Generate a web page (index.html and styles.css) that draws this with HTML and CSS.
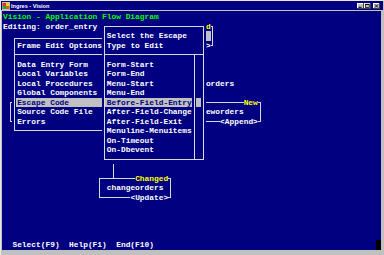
FILE: index.html
```html
<!DOCTYPE html>
<html lang="en">
<head>
    <meta charset="UTF-8">
    <meta name="viewport" content="width=device-width, initial-scale=1.0">
    <title>Ingres - Vision</title>
    <link rel="stylesheet" href="styles.css">
</head>
<body>
    <div class="window">
        <div class="titlebar">
            <svg class="app-icon" viewBox="0 0 8 8">
                <rect x="0" y="0" width="8" height="8" fill="#c0c0c0"/>
                <rect x="0.5" y="1" width="3.5" height="3" fill="#e03020"/>
                <rect x="4" y="1" width="3.5" height="3" fill="#f0d020"/>
                <rect x="0.5" y="4" width="3.5" height="3" fill="#30a040"/>
                <rect x="4" y="4" width="3.5" height="3" fill="#d06010"/>
            </svg>
            <span class="caption">Ingres - Vision</span>
            <div class="controls">
                <span class="ctl"><svg viewBox="0 0 7 6"><rect x="1.5" y="3.8" width="3" height="1" fill="#000"/></svg></span>
                <span class="ctl"><svg viewBox="0 0 7 6"><rect x="1.6" y="1.2" width="3.6" height="3.2" fill="none" stroke="#000" stroke-width="0.7"/><rect x="1.6" y="1" width="3.6" height="0.9" fill="#000"/></svg></span>
                <span class="ctl close"><svg viewBox="0 0 7 6"><path d="M2 1.5 L5 4.5 M5 1.5 L2 4.5" stroke="#000" stroke-width="0.9"/></svg></span>
            </div>
        </div>

        <div class="screen">
            <div class="heading">Vision - Application Flow Diagram</div>
            <div class="editing">Editing: order_entry</div>

            <!-- flow diagram, mostly hidden under the popups -->
            <div class="node node-root">
                <span class="node-tag">Changed</span>
                <span class="node-name"></span>
                <span class="node-act">&lt;Update&gt;</span>
            </div>
            <div class="cursor"></div>
            <div class="node-text">orders</div>
            <div class="node node-left">
                <span class="node-tag"></span>
                <span class="node-name"></span>
                <span class="node-act"></span>
            </div>
            <div class="node node-new">
                <span class="node-tag">New</span>
                <span class="node-name">neworders</span>
                <span class="node-act">&lt;Append&gt;</span>
            </div>
            <div class="link"></div>
            <div class="node node-change">
                <span class="node-tag">Changed</span>
                <span class="node-name">changeorders</span>
                <span class="node-act">&lt;Update&gt;</span>
            </div>

            <div class="popup popup-frame">
                <div class="popup-title">Frame Edit Options</div>
                <div class="rule"></div>
                <ul class="menu">
                    <li>Data Entry Form</li>
                    <li>Local Variables</li>
                    <li>Local Procedures</li>
                    <li>Global Components</li>
                    <li class="on">Escape Code</li>
                    <li>Source Code File</li>
                    <li>Errors</li>
                </ul>
            </div>

            <div class="popup popup-escape">
                <div class="popup-title">Select the Escape</div>
                <div class="popup-title second">Type to Edit</div>
                <div class="rule"></div>
                <ul class="menu">
                    <li>Form-Start</li>
                    <li>Form-End</li>
                    <li>Menu-Start</li>
                    <li>Menu-End</li>
                    <li class="on">Before-Field-Entry</li>
                    <li>After-Field-Change</li>
                    <li>After-Field-Exit</li>
                    <li>Menuline-Menuitems</li>
                    <li>On-Timeout</li>
                    <li>On-Dbevent</li>
                </ul>
                <div class="scroll-track"></div>
                <div class="scroll-thumb"></div>
            </div>

            <div class="keys">Select(F9)  Help(F1)  End(F10)</div>
            <div class="blot"></div>
        </div>
    </div>
</body>
</html>
```

FILE: styles.css
```css
:root {
    --cw: 4.72px;
    --rh: 9.52px;
    --navy: #000080;
    --ink: #ffffff;
    --line: #d8d8e4;
    --hi: #c0c0c0;
}

body {
    margin: 0;
    background: #c0c0c0;
}

.window {
    width: 384px;
    height: 255px;
    box-sizing: border-box;
    padding: 1px 1px 0 1px;
    background: #c0c0c0;
    box-shadow: inset 1px 1px #e8e8e8;
}

.titlebar {
    height: 9px;
    background: var(--navy);
    display: flex;
    align-items: center;
    gap: 1px;
    padding-left: 1px;
    color: #fff;
    font: bold 5.6px "Liberation Sans", Arial, sans-serif;
}
.app-icon {
    width: 8px;
    height: 8px;
}
.controls {
    margin-left: auto;
    margin-right: 3px;
    display: flex;
}
.ctl {
    width: 7px;
    height: 6px;
    background: #c0c0c0;
    box-shadow: inset -1px -1px #404040, inset 1px 1px #fff;
    display: flex;
}
.ctl svg {
    width: 7px;
    height: 6px;
}
.ctl.close {
    margin-left: 2px;
}

/* 80 x 25 character screen */
.screen {
    margin: 1px 2px 5px 1px;
    height: 239px;
    box-sizing: border-box;
    padding: 1px 0 0 1px;
    background: var(--navy);
    display: grid;
    grid-template-columns: repeat(80, var(--cw));
    grid-template-rows: repeat(25, var(--rh));
    font-family: "Liberation Mono", monospace;
    font-size: 7.87px;
    font-weight: bold;
    line-height: var(--rh);
    color: var(--ink);
    white-space: nowrap;
    overflow: hidden;
}

.heading { grid-area: 1 / 1 / 2 / 34; color: #00ff00; }
.editing { grid-area: 2 / 1 / 3 / 21; }
.keys { grid-area: 25 / 3 / 26 / 40; white-space: pre; }
.blot { grid-area: 25 / 80 / 26 / 81; background: #000; }

/* diagram */
.node {
    position: relative;
    display: grid;
    grid-template-rows: repeat(3, var(--rh));
}
.node::before {
    content: "";
    position: absolute;
    inset: calc(var(--rh) / 2 - 0.5px) calc(var(--cw) / 2 - 0.5px);
    border: 1px solid var(--line);
}
.node > span {
    position: relative;
}
.node-tag {
    justify-self: end;
    margin-right: var(--cw);
    background: var(--navy);
    color: #ffff00;
}
.node-name {
    padding-left: calc(var(--cw) * 2);
}
.node-act {
    justify-self: end;
    margin-right: var(--cw);
    background: var(--navy);
}
.node-root { grid-area: 2 / 31 / 5 / 46; }
.node-left { grid-area: 10 / 2 / 13 / 20; }
.node-new { grid-area: 10 / 41 / 13 / 56; }
.node-change { grid-area: 18 / 21 / 21 / 37; }

.cursor { grid-area: 3 / 44 / 4 / 45; background: var(--hi); }
.node-text { grid-area: 8 / 44 / 9 / 50; }

.link {
    grid-area: 16 / 24 / 19 / 25;
    justify-self: center;
    width: 1px;
    margin: calc(var(--rh) / 2) 0;
    background: var(--line);
}

/* popups */
.popup {
    position: relative;
    display: grid;
    background: var(--navy);
}
.popup::before {
    content: "";
    position: absolute;
    inset: calc(var(--rh) / 2 - 0.5px) calc(var(--cw) / 2 - 0.5px);
    border: 1px solid var(--line);
}
.popup > * {
    position: relative;
}
.popup-frame {
    grid-area: 3 / 3 / 14 / 23;
    grid-template-columns: repeat(20, var(--cw));
    grid-template-rows: repeat(11, var(--rh));
}
.popup-frame::before {
    top: 7px;
}
.popup-escape {
    grid-area: 2 / 22 / 17 / 44;
    grid-template-columns: repeat(22, var(--cw));
    grid-template-rows: repeat(15, var(--rh));
}

.popup-title { grid-area: 2 / 2 / 3 / 21; }
.popup-title.second { grid-area: 3 / 2 / 4 / 21; }

.rule {
    grid-column: 1 / -1;
    align-self: center;
    height: 1px;
    margin: 0 calc(var(--cw) / 2 - 0.5px);
    background: var(--line);
}
.popup-frame .rule { grid-row: 3; }
.popup-escape .rule { grid-row: 4; }

.menu {
    list-style: none;
    margin: 0;
    padding: 0;
}
.popup-frame .menu { grid-area: 4 / 2 / 11 / 20; }
.popup-escape .menu { grid-area: 5 / 2 / 15 / 20; }
.menu li {
    height: var(--rh);
}
.menu li.on {
    margin-left: -1.6px;
    padding-left: 1.6px;
    background: var(--hi);
    color: var(--navy);
}

.scroll-track {
    grid-area: 4 / 20 / 16 / 21;
    justify-self: center;
    width: 1px;
    margin: calc(var(--rh) / 2) 0;
    background: var(--line);
}
.scroll-thumb {
    grid-area: 9 / 21 / 10 / 22;
    background: var(--hi);
}
```
